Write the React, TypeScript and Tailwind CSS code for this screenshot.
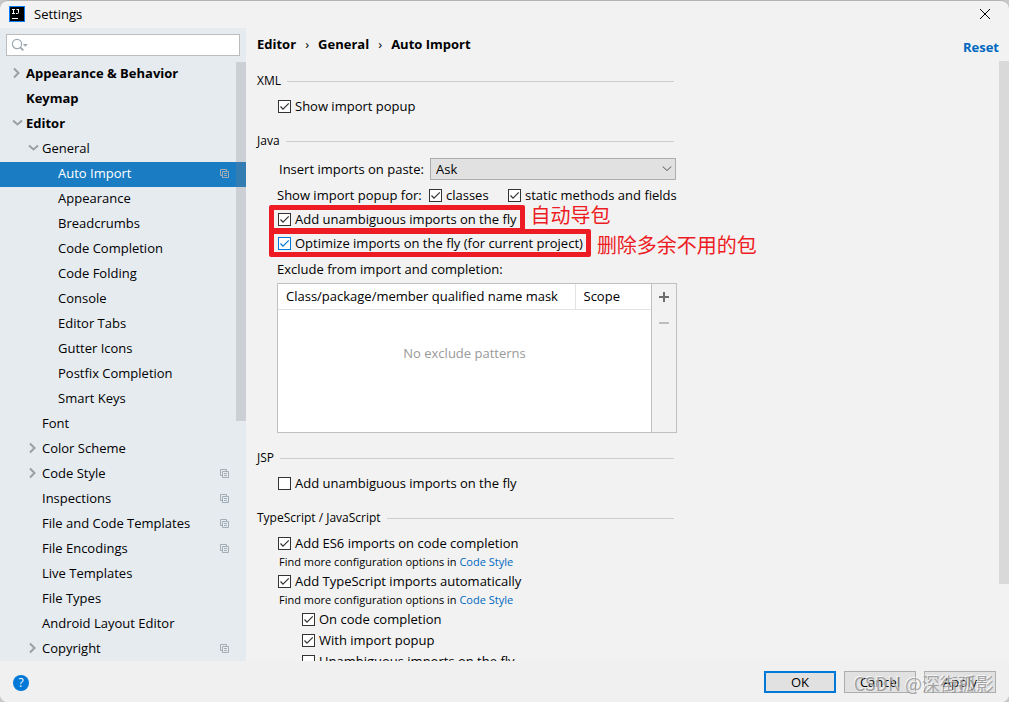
import React from 'react';

interface TreeItem {
  label: string;
  level: number;
  arrow?: 'open' | 'closed';
  bold?: boolean;
  selected?: boolean;
  project?: boolean;
}

const treeItems: TreeItem[] = [
  { label: 'Appearance & Behavior', level: 0, arrow: 'closed', bold: true },
  { label: 'Keymap', level: 0, bold: true },
  { label: 'Editor', level: 0, arrow: 'open', bold: true },
  { label: 'General', level: 1, arrow: 'open' },
  { label: 'Auto Import', level: 2, selected: true, project: true },
  { label: 'Appearance', level: 2 },
  { label: 'Breadcrumbs', level: 2 },
  { label: 'Code Completion', level: 2 },
  { label: 'Code Folding', level: 2 },
  { label: 'Console', level: 2 },
  { label: 'Editor Tabs', level: 2 },
  { label: 'Gutter Icons', level: 2 },
  { label: 'Postfix Completion', level: 2 },
  { label: 'Smart Keys', level: 2 },
  { label: 'Font', level: 1 },
  { label: 'Color Scheme', level: 1, arrow: 'closed' },
  { label: 'Code Style', level: 1, arrow: 'closed', project: true },
  { label: 'Inspections', level: 1, project: true },
  { label: 'File and Code Templates', level: 1, project: true },
  { label: 'File Encodings', level: 1, project: true },
  { label: 'Live Templates', level: 1 },
  { label: 'File Types', level: 1 },
  { label: 'Android Layout Editor', level: 1 },
  { label: 'Copyright', level: 1, arrow: 'closed', project: true },
];

const indents = ['pl-[10px]', 'pl-[26px]', 'pl-[42px]'];

const TreeArrow: React.FC<{ state?: 'open' | 'closed' }> = ({ state }) => (
  <svg className="w-4 h-4 shrink-0" viewBox="0 0 16 16" fill="none" stroke="#9a9fa3" strokeWidth="2">
    {state === 'closed' && <path d="M4 3.5 8.5 8 4 12.5" />}
    {state === 'open' && <path d="M3 5.5 7.5 9.5 12 5.5" />}
  </svg>
);

const ProjectIcon: React.FC = () => (
  <svg className="w-[9px] h-[9px] shrink-0" viewBox="0 0 9 9" fill="none" stroke="#a3adb5">
    <path d="M2 6.5H.5v-6h6V2" />
    <path d="M2.5 2.5h6v6h-6zM4 4.5h3M4 6.5h3" />
  </svg>
);

/* Logo tile in the title bar */
const AppLogo: React.FC = () => (
  <svg className="w-4 h-4" viewBox="0 0 16 16">
    <path d="M0 0h16v16H0z" fill="#087cfa" />
    <path d="M1 1h14v14H1z" fill="#000" />
    <path d="M3 3.5h3M4.5 3.5v4M3 7.5h3M7.5 3.5h2M9.5 3v3.5q0 1-1 1h-1.5" stroke="#fff" fill="none" />
    <path d="M3 12h6v1H3z" fill="#fff" />
  </svg>
);

interface CheckProps {
  label: string;
  checked?: boolean;
  focused?: boolean;
}

const Check: React.FC<CheckProps> = ({ label, checked = false, focused = false }) => (
  <label className="inline-flex items-center gap-1 whitespace-nowrap">
    <span className="grid w-[13px] h-[13px] shrink-0">
      <input
        type="checkbox"
        defaultChecked={checked}
        className={`peer col-start-1 row-start-1 appearance-none w-[13px] h-[13px] border bg-white ${
          focused ? 'border-[#0078d7]' : 'border-[#333]'
        }`}
      />
      <svg
        className={`col-start-1 row-start-1 w-[13px] h-[13px] pointer-events-none invisible peer-checked:visible ${
          focused ? 'text-[#0078d7]' : 'text-[#333]'
        }`}
        viewBox="0 0 13 13"
        fill="none"
        stroke="currentColor"
        strokeWidth="1.2"
      >
        <path d="M2.5 6.5 5 9.2 10.8 3.3" />
      </svg>
    </span>
    {label}
  </label>
);

const GroupTitle: React.FC<{ title: string }> = ({ title }) => (
  <div className="flex items-center gap-1.5 h-5 mr-[3px]">
    <h2 className="text-xs">{title}</h2>
    <div className="flex-1 h-px bg-[#cdcdcd]" />
  </div>
);

const StyleHint: React.FC = () => (
  <p className="h-[18px] leading-[18px] pl-[22px] text-[11px]">
    Find more configuration options in{' '}
    <a href="#code-style" className="text-[#0068c0]">Code Style</a>
  </p>
);

const Sidebar: React.FC = () => (
  <aside className="relative w-[246px] shrink-0 bg-[#e6ebf0] overflow-hidden">
    <div className="relative m-1.5">
      <input
        type="text"
        aria-label="Search settings"
        className="block w-full h-[22px] pl-6 border border-[#bcbcbc] bg-white outline-none"
      />
      <svg
        className="absolute left-[5px] top-[3px] w-[18px] h-4 pointer-events-none"
        viewBox="0 0 18 16"
        fill="none"
        stroke="#9aa7b0"
        strokeWidth="1.2"
      >
        <circle cx="6" cy="7" r="4.6" />
        <path d="m9.3 10.3 3 3" strokeWidth="1.8" />
        <path d="M11.8 7h5l-2.5 2.8z" fill="#9aa7b0" stroke="none" />
      </svg>
    </div>
    <ul>
      {treeItems.map((item, index) => (
        <li
          key={index}
          className={`flex items-center h-[25px] pb-[3px] pr-[17px] ${indents[item.level]} ${
            item.selected ? 'bg-[#1a7dc4] text-white' : ''
          } ${item.bold ? 'font-bold' : ''}`}
        >
          <TreeArrow state={item.arrow} />
          <span className="flex-1 whitespace-nowrap">{item.label}</span>
          {item.project && <ProjectIcon />}
        </li>
      ))}
    </ul>
    <div className="absolute right-0 top-[34px] w-2.5 h-[359px] bg-[#808080]/25" />
  </aside>
);

const ExcludeTable: React.FC = () => (
  <div className="flex ml-5 h-[150px] border border-[#c0c0c0]">
    <div className="flex-1 flex flex-col bg-white">
      <table className="w-full table-fixed text-left">
        <thead>
          <tr className="h-[25px] border-b border-[#e3e3e3]">
            <th className="pl-2 font-normal whitespace-nowrap border-r border-[#e3e3e3]">
              Class/package/member qualified name mask
            </th>
            <th className="w-[76px] pl-2 font-normal">Scope</th>
          </tr>
        </thead>
      </table>
      <p className="mt-[33px] text-center text-[#999]">No exclude patterns</p>
    </div>
    <div className="flex flex-col items-center w-[25px] border-l border-[#c0c0c0]">
      <button type="button" aria-label="Add" className="h-[26px]">
        <svg className="w-2.5 h-2.5" viewBox="0 0 10 10" fill="none" stroke="#6e6e6e" strokeWidth="2">
          <path d="M5 0v10M0 5h10" />
        </svg>
      </button>
      <button type="button" aria-label="Remove" disabled className="h-[26px]">
        <svg className="w-2.5 h-2.5" viewBox="0 0 10 10" fill="none" stroke="#bdbdbd" strokeWidth="2">
          <path d="M0 5h10" />
        </svg>
      </button>
    </div>
  </div>
);

/* Check box framed in red with a remark next to it */
const MarkedCheck: React.FC<CheckProps & { note: string; raised?: boolean }> = ({ note, raised, ...check }) => (
  <div className="flex h-6 pl-[21px]">
    <div className="relative flex items-center">
      <Check {...check} />
      <span className="absolute -left-[9px] -right-2 -top-0.5 -bottom-0.5 border-[5px] border-[#ed1c24] rounded-xs pointer-events-none" />
      <span
        className={`absolute left-full ml-3.5 text-xl leading-5 whitespace-nowrap text-[#ed1c24] ${
          raised ? '-top-px' : 'top-[5px]'
        }`}
      >
        {note}
      </span>
    </div>
  </div>
);

const Content: React.FC = () => (
  <main className="relative flex-1 min-w-0 flex flex-col overflow-hidden bg-[#f2f2f2]">
    <header className="flex items-center justify-between h-[33px] shrink-0 pl-[11px] pr-2.5 font-bold">
      <nav aria-label="Breadcrumb" className="flex items-center pb-0.5">
        <span>Editor</span>
        <span className="w-[22px] text-center font-normal">›</span>
        <span>General</span>
        <span className="w-[22px] text-center font-normal">›</span>
        <span>Auto Import</span>
      </nav>
      <button type="button" className="pt-1 font-bold text-[#0068c0]">Reset</button>
    </header>
    <div className="w-[420px] pt-2.5 ml-[11px]">
      <section>
        <GroupTitle title="XML" />
        <div className="flex h-5 mt-[5px] pl-[21px]">
          <Check label="Show import popup" checked />
        </div>
      </section>
      <section className="mt-[15px]">
        <GroupTitle title="Java" />
        <div className="flex items-center justify-between mt-[7px] pl-[22px] mr-px">
          <label htmlFor="insert-imports">Insert imports on paste:</label>
          <div className="relative w-[246px]">
            <select
              id="insert-imports"
              defaultValue="Ask"
              className="block w-full h-[22px] pl-[5px] appearance-none border border-[#adadad] bg-[#e1e1e1]"
            >
              <option>Ask</option>
              <option>All</option>
              <option>None</option>
            </select>
            <svg
              className="absolute right-1 top-2 w-[10px] h-[6px] pointer-events-none"
              viewBox="0 0 10 6"
              fill="none"
              stroke="#555"
            >
              <path d="m.7.5 4.3 4 4.3-4" />
            </svg>
          </div>
        </div>
        <div className="flex items-center h-5 mt-[5px] pl-5">
          <span className="w-[152px] whitespace-nowrap">Show import popup for:</span>
          <span className="flex w-[79px]">
            <Check label="classes" checked />
          </span>
          <Check label="static methods and fields" checked />
        </div>
        <div className="mt-0.5">
          <MarkedCheck label="Add unambiguous imports on the fly" checked note="自动导包" raised />
          <MarkedCheck label="Optimize imports on the fly (for current project)" checked focused note="删除多余不用的包" />
        </div>
        <p className="h-5 leading-5 mt-1 mb-1 pl-5">Exclude from import and completion:</p>
        <ExcludeTable />
      </section>
      <section className="mt-[15px]">
        <GroupTitle title="JSP" />
        <div className="flex h-5 mt-[5px] pl-[21px]">
          <Check label="Add unambiguous imports on the fly" />
        </div>
      </section>
      <section className="mt-[15px]">
        <GroupTitle title="TypeScript / JavaScript" />
        <div className="flex h-5 mt-[5px] pl-[21px]">
          <Check label="Add ES6 imports on code completion" checked />
        </div>
        <StyleHint />
        <div className="flex h-5 pl-[21px]">
          <Check label="Add TypeScript imports automatically" checked />
        </div>
        <StyleHint />
        <div className="flex flex-col gap-px pl-[45px]">
          <div className="flex h-5">
            <Check label="On code completion" checked />
          </div>
          <div className="flex h-5">
            <Check label="With import popup" checked />
          </div>
          <div className="flex h-5">
            <Check label="Unambiguous imports on the fly" />
          </div>
        </div>
      </section>
    </div>
    <div className="absolute right-0 top-[33px] w-2.5 h-[523px] bg-[#d9d9d9]" />
  </main>
);

const Footer: React.FC = () => (
  <footer className="flex items-center gap-2 h-[41px] shrink-0 px-[13px] bg-[#f0f0f0]">
    <button type="button" aria-label="Help" className="w-4 h-4 mt-0.5 rounded-full bg-[#0078d7] text-white text-xs leading-4">
      ?
    </button>
    <div className="flex-1" />
    <button type="button" className="w-[72px] h-[22px] border-2 border-[#0078d7] bg-[#e1e1e1] leading-4">OK</button>
    <div className="relative flex gap-2">
      <button type="button" className="w-[72px] h-[22px] border border-[#adadad] bg-[#e1e1e1] leading-4">Cancel</button>
      <button type="button" className="w-[72px] h-[22px] border border-[#adadad] bg-[#e1e1e1] leading-4">Apply</button>
      <span className="absolute right-0.5 top-0 text-lg leading-6 whitespace-nowrap text-[#8c8c8c]/75 [text-shadow:-1px_-1px_0_#ffffffb0] font-['Noto_Sans_CJK_SC',sans-serif] pointer-events-none">
        CSDN @深街孤影
      </span>
    </div>
  </footer>
);

const App: React.FC = () => {
  return (
    <div className="h-screen bg-[#c8c8c8]">
      <div className="flex flex-col h-full overflow-hidden rounded-lg border-t border-[#b4b4b4] bg-[#f2f2f2] text-[13px] leading-5 text-black font-['Open_Sans','Noto_Sans_CJK_SC',sans-serif]">
        <div className="flex items-center h-[27px] shrink-0 pl-[9px] pr-[19px] pb-px">
          <AppLogo />
          <h1 className="flex-1 pl-[9px]">Settings</h1>
          <button type="button" aria-label="Close">
            <svg className="w-2.5 h-2.5" viewBox="0 0 10 10" fill="none" stroke="#000">
              <path d="m0 0 10 10M10 0 0 10" />
            </svg>
          </button>
        </div>
        <div className="flex flex-1 min-h-0">
          <Sidebar />
          <Content />
        </div>
        <Footer />
      </div>
    </div>
  );
};

export default App;
